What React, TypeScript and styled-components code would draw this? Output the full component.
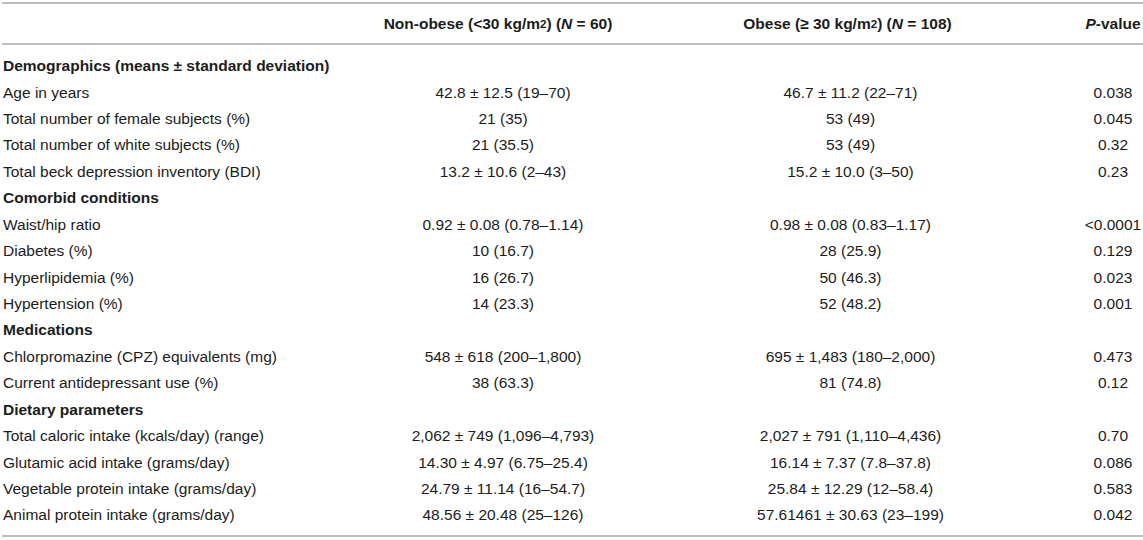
import React from 'react';
import styled, { createGlobalStyle } from 'styled-components';

const GlobalStyle = createGlobalStyle`
	html, body {
		margin: 0;
		padding: 0;
		background: #fff;
	}
	body {
		font-family: "Liberation Sans", Arial, Helvetica, sans-serif;
		font-size: 15.5px;
		color: #1c1c1c;
	}
`;

const COLUMNS = '386px 230px 465px 60px';

const Table = styled.div`
	margin: 2px 0 0 2px;
	width: 1141px;
	border-top: 2px solid #bdbdbd;
	border-bottom: 2px solid #bdbdbd;
`;

const HeadRow = styled.div`
	display: grid;
	grid-template-columns: ${COLUMNS};
	height: 39px;
	border-bottom: 2px solid #bdbdbd;
	font-weight: 700;
`;

const Body = styled.div`
	padding: 8px 0 6px;
`;

const Row = styled.div`
	display: grid;
	grid-template-columns: ${COLUMNS};
	height: 26.43px;
`;

const Cell = styled.div<{ $align?: 'left' | 'center'; $shift?: number }>`
	display: flex;
	align-items: center;
	justify-content: ${(p) => (p.$align === 'left' ? 'flex-start' : 'center')};
	white-space: nowrap;
	padding-left: ${(p) => (p.$align === 'left' ? '1px' : '0')};
	padding-right: ${(p) => (p.$shift ? `${p.$shift}px` : '0')};
`;

const SectionCell = styled(Cell)`
	grid-column: 1 / -1;
	font-weight: 700;
`;

const Sup = styled.sup`
	font-size: 0.75em;
	line-height: 0;
	vertical-align: 4px;
`;

type DataRow = { label: string; a: string; b: string; p: string };
type Section = { title: string; rows: DataRow[] };

const sections: Section[] = [
	{
		title: 'Demographics (means ± standard deviation)',
		rows: [
			{ label: 'Age in years', a: '42.8 ± 12.5 (19–70)', b: '46.7 ± 11.2 (22–71)', p: '0.038' },
			{ label: 'Total number of female subjects (%)', a: '21 (35)', b: '53 (49)', p: '0.045' },
			{ label: 'Total number of white subjects (%)', a: '21 (35.5)', b: '53 (49)', p: '0.32' },
			{ label: 'Total beck depression inventory (BDI)', a: '13.2 ± 10.6 (2–43)', b: '15.2 ± 10.0 (3–50)', p: '0.23' },
		],
	},
	{
		title: 'Comorbid conditions',
		rows: [
			{ label: 'Waist/hip ratio', a: '0.92 ± 0.08 (0.78–1.14)', b: '0.98 ± 0.08 (0.83–1.17)', p: '<0.0001' },
			{ label: 'Diabetes (%)', a: '10 (16.7)', b: '28 (25.9)', p: '0.129' },
			{ label: 'Hyperlipidemia (%)', a: '16 (26.7)', b: '50 (46.3)', p: '0.023' },
			{ label: 'Hypertension (%)', a: '14 (23.3)', b: '52 (48.2)', p: '0.001' },
		],
	},
	{
		title: 'Medications',
		rows: [
			{ label: 'Chlorpromazine (CPZ) equivalents (mg)', a: '548 ± 618 (200–1,800)', b: '695 ± 1,483 (180–2,000)', p: '0.473' },
			{ label: 'Current antidepressant use (%)', a: '38 (63.3)', b: '81 (74.8)', p: '0.12' },
		],
	},
	{
		title: 'Dietary parameters',
		rows: [
			{ label: 'Total caloric intake (kcals/day) (range)', a: '2,062 ± 749 (1,096–4,793)', b: '2,027 ± 791 (1,110–4,436)', p: '0.70' },
			{ label: 'Glutamic acid intake (grams/day)', a: '14.30 ± 4.97 (6.75–25.4)', b: '16.14 ± 7.37 (7.8–37.8)', p: '0.086' },
			{ label: 'Vegetable protein intake (grams/day)', a: '24.79 ± 11.14 (16–54.7)', b: '25.84 ± 12.29 (12–58.4)', p: '0.583' },
			{ label: 'Animal protein intake (grams/day)', a: '48.56 ± 20.48 (25–126)', b: '57.61461 ± 30.63 (23–199)', p: '0.042' },
		],
	},
];

const App: React.FC = () => {
	return (
		<>
			<GlobalStyle />
			<Table>
				<HeadRow>
					<Cell $align="left" />
					<Cell $shift={10}>
						Non-obese (&lt;30 kg/m<Sup>2</Sup>)&nbsp;(<i>N</i>&nbsp;=&nbsp;60)
					</Cell>
					<Cell $shift={6}>
						Obese (≥ 30 kg/m<Sup>2</Sup>)&nbsp;(<i>N</i>&nbsp;=&nbsp;108)
					</Cell>
					<Cell>
						<i>P</i>-value
					</Cell>
				</HeadRow>
				<Body>
					{sections.map((s) => (
						<React.Fragment key={s.title}>
							<Row>
								<SectionCell $align="left">{s.title}</SectionCell>
							</Row>
							{s.rows.map((r) => (
								<Row key={r.label}>
									<Cell $align="left">{r.label}</Cell>
									<Cell>{r.a}</Cell>
									<Cell>{r.b}</Cell>
									<Cell>{r.p}</Cell>
								</Row>
							))}
						</React.Fragment>
					))}
				</Body>
			</Table>
		</>
	);
};

export default App;
